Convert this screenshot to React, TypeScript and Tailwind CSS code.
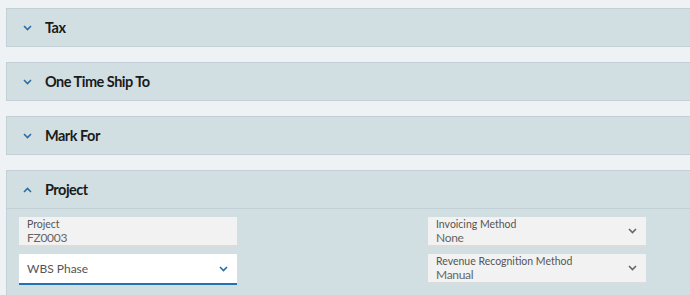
import React from "react";

const font = { fontFamily: 'Lato, "Open Sans", sans-serif' };

function Chevron({ up = false, className = "" }: { up?: boolean; className?: string }) {
  return (
    <svg width="9" height="6" viewBox="0 0 9 6" className={className}>
      <path
        d={up ? "M1 5 L4.5 1.5 L8 5" : "M1 1 L4.5 4.5 L8 1"}
        fill="none"
        stroke="currentColor"
        strokeWidth="1.6"
      />
    </svg>
  );
}

function Header({ title, up = false }: { title: string; up?: boolean }) {
  return (
    <div className="flex h-[38px] items-center border-b border-[#c3d1d6] bg-[#d1dfe3] pl-[16px]">
      <Chevron up={up} className="text-[#2b6ca3]" />
      <span className="ml-[13px] text-[14.5px] font-bold tracking-[-0.5px] text-[#1b1b1b]">{title}</span>
    </div>
  );
}

function Field({ label, value, select = false }: { label: string; value: string; select?: boolean }) {
  return (
    <div className="flex h-[30px] w-[218px] items-center justify-between border-b-2 border-[#dcdcdc] bg-[#f2f2f2] pl-[8px] pr-[9px]">
      <div className="flex flex-col pt-[1px] leading-none">
        <span className="text-[10.5px] text-[#555]">{label}</span>
        <span className="mt-[2px] text-[12px] tracking-[-0.3px] text-[#666]">{value}</span>
      </div>
      {select && <Chevron className="text-[#666]" />}
    </div>
  );
}

export default function App() {
  return (
    <div style={font} className="h-[295px] w-[690px] overflow-hidden bg-[#eef2f5] pl-[6px]">
      <div className="w-[720px]">
        <div className="mt-[8px] border-t border-l border-[#c3d1d6]">
          <Header title="Tax" />
        </div>
        <div className="mt-[15px] border-t border-l border-[#c3d1d6]">
          <Header title="One Time Ship To" />
        </div>
        <div className="mt-[15px] border-t border-l border-[#c3d1d6]">
          <Header title="Mark For" />
        </div>
        <div className="mt-[15px] border-t border-l border-[#c3d1d6] bg-[#d1dfe3]">
          <Header title="Project" up />
          <div className="flex pl-[12px] pt-[8px] pb-[12px]">
            <div className="flex w-[409px] flex-col gap-[7px]">
              <Field label="Project" value="FZ0003" />
              <div className="flex h-[31px] w-[218px] items-center justify-between border-b-2 border-[#1f74b8] bg-white pl-[8px] pr-[9px]">
                <span className="text-[12px] text-[#555]">WBS Phase</span>
                <Chevron className="text-[#2b6ca3]" />
              </div>
            </div>
            <div className="flex flex-col gap-[7px]">
              <Field label="Invoicing Method" value="None" select />
              <Field label="Revenue Recognition Method" value="Manual" select />
            </div>
          </div>
        </div>
      </div>
    </div>
  );
}
